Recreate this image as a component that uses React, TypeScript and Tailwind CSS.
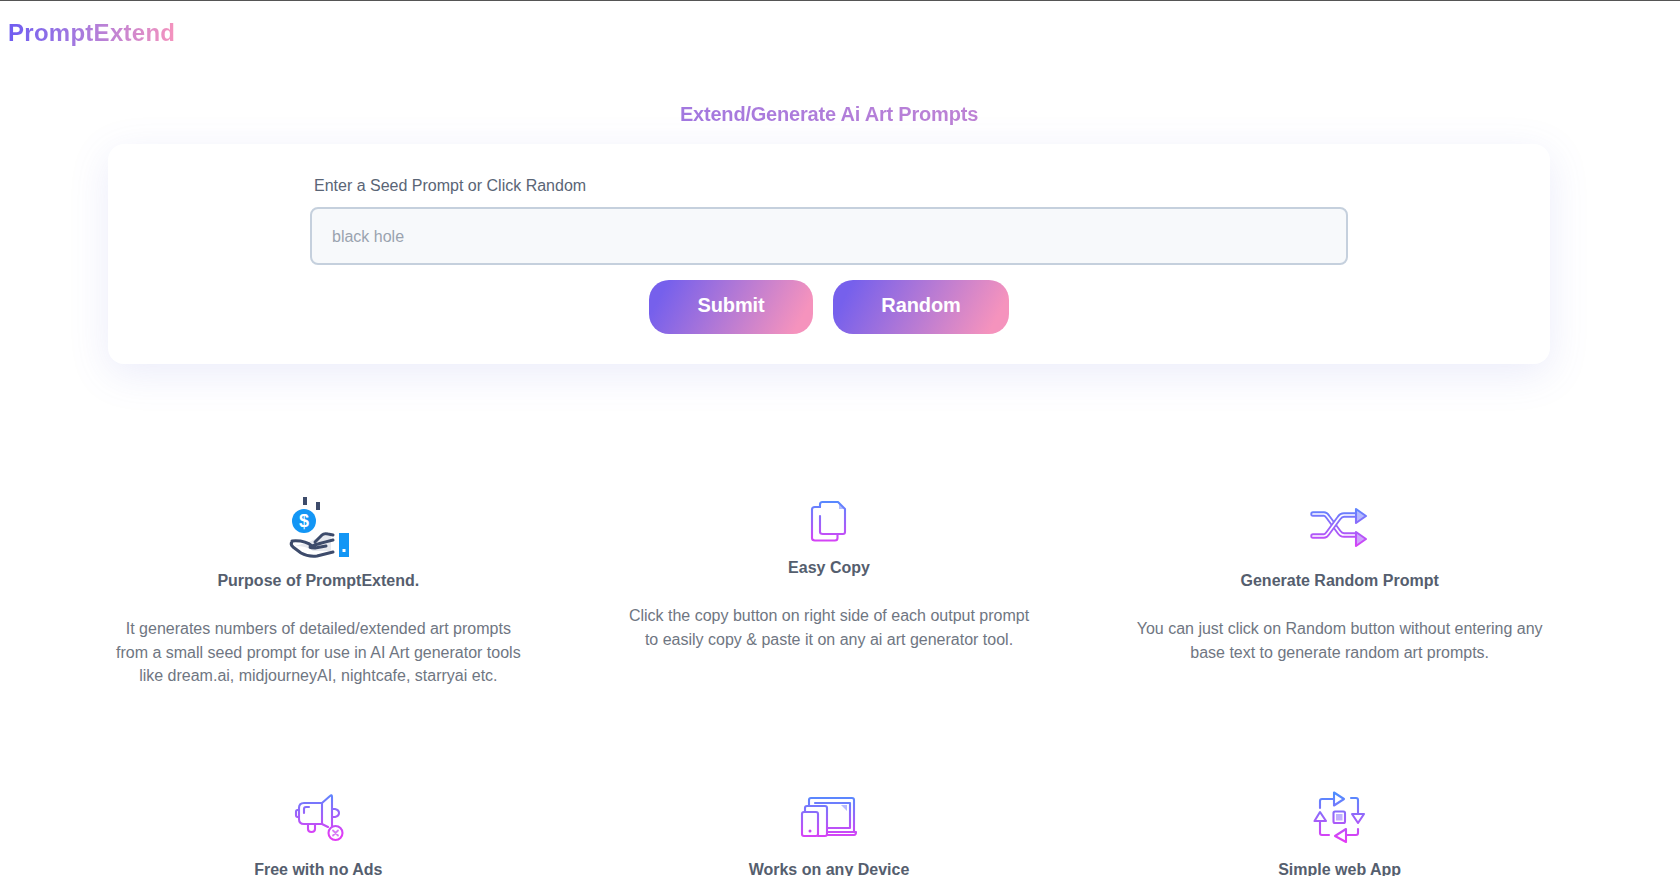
function Defs({ id }: { id: string }) {
  return (
    <defs>
      <linearGradient id={id} x1="0" y1="8" x2="0" y2="54" gradientUnits="userSpaceOnUse">
        <stop offset="0" stopColor="#4f8dff" />
        <stop offset="1" stopColor="#e23cf5" />
      </linearGradient>
      <linearGradient id={id + "f"} x1="0" y1="8" x2="0" y2="54" gradientUnits="userSpaceOnUse">
        <stop offset="0" stopColor="#a9c4ff" />
        <stop offset="1" stopColor="#d99bfb" />
      </linearGradient>
    </defs>
  );
}

const base = { fill: "none", strokeWidth: 2.1, strokeLinecap: "round" as const, strokeLinejoin: "round" as const };

function HandIcon() {
  return (
    <svg width="90" height="75" viewBox="2 -1 90 75" className="block mx-auto">
      <rect x="32" y="11" width="4" height="8" fill="#3d4b6b" />
      <rect x="45" y="16" width="4" height="8" fill="#3d4b6b" />
      <circle cx="33" cy="35" r="12" fill="#1396f5" />
      <text x="33" y="41" textAnchor="middle" fontSize="18" fontWeight="700" fill="#fff" fontFamily="Liberation Sans, sans-serif">$</text>
      <path d="M24 60 Q36 60 42 65 H60 V50 L50 50 L38 56 Z" fill="#e6e8ee" />
      <path d="M21 55 Q34 54 41 60 Q46 58 62 54 M41 60 Q36 62 44 62 L55 60 M21 56 Q19 58 22 61 L30 67 Q37 71 46 70 L62 66 M44 56 L51 49 Q53 47 57 48 L62 49" fill="none" stroke="#3d4b6b" strokeWidth="3" strokeLinecap="round" strokeLinejoin="round" />
      <rect x="68" y="47" width="10" height="24" fill="#1396f5" />
      <rect x="71.5" y="63" width="3" height="3" fill="#fff" />
    </svg>
  );
}

function CopyIcon() {
  return (
    <svg width="80" height="60" viewBox="-1 -4 80 60" className="block mx-auto">
      <Defs id="c" />
      <path d="M49 13 L54 18 H49 Z" fill="url(#cf)" />
      <g {...base} stroke="url(#c)">
        <path d="M30 16 V13.5 Q30 11 32.5 11 H48 L55 18 V41 Q55 43 53 43 H33 Q30 43 30 41 V25" />
        <path d="M30 16 H25 Q22 16 22 18.5 V47 Q22 49.5 25 49.5 H45 Q47.5 49.5 47.5 47 V43.5" />
      </g>
    </svg>
  );
}

function ShuffleIcon() {
  const a = "M13 18 H24 Q26 18 28 21 L39 36 Q41 39 44 39 H56";
  const b = "M13 40 H24 Q26 40 28 37 L39 22 Q41 19 44 19 H56";
  return (
    <svg width="80" height="60" viewBox="0 4 80 60" className="block mx-auto">
      <Defs id="s" />
      <g fill="none" strokeLinecap="round">
        <path d={a} stroke="url(#s)" strokeWidth="5.4" />
        <path d={a} stroke="#fff" strokeWidth="1.7" />
        <path d={b} stroke="url(#s)" strokeWidth="5.4" />
        <path d={b} stroke="#fff" strokeWidth="1.7" />
      </g>
      <path d="M56 13 L66 20 L56 27 Z" fill="url(#sf)" stroke="url(#s)" strokeWidth="2.1" strokeLinejoin="round" />
      <path d="M56 36 L66 43 L56 50 Z" fill="url(#sf)" stroke="url(#s)" strokeWidth="2.1" strokeLinejoin="round" />
    </svg>
  );
}

function MegaphoneIcon() {
  return (
    <svg width="80" height="60" viewBox="-1 7 80 60" className="block mx-auto">
      <Defs id="m" />
      <g {...base} stroke="url(#m)">
        <path d="M43 21 H25 Q20 21 20 26 V37 Q20 42 25 42 H43 Z" />
        <path d="M43 21 L51 14 Q53 12 53 15 V44" />
        <path d="M43 42 L49 45" />
        <path d="M25 31 V27 Q25 25 27 25 H30" />
        <path d="M20 28 H18.5 Q17 28 17 30 V33 Q17 35 18.5 35 H20" />
        <path d="M54 27 H56 Q60 28 60 31 Q60 34 56 35 H54" />
        <path d="M29 42 V47 Q29 50 32.5 50 Q36 50 36 47 V42" />
        <circle cx="56.5" cy="51" r="7" />
      </g>
      <path d="M54 48.5 L59 53.5 M59 48.5 L54 53.5" stroke="#d77cf5" strokeWidth="1.8" strokeLinecap="round" />
    </svg>
  );
}

function DevicesIcon() {
  return (
    <svg width="80" height="60" viewBox="-1 3 80 60" className="block mx-auto">
      <Defs id="d" />
      <path d="M51 19 H57 V25 Z" fill="url(#df)" />
      <g {...base} stroke="url(#d)">
        <path d="M19 19 V14 Q19 12 21 12 H62 Q64 12 64 14 V46" />
        <path d="M25 17 H60 V42 H37" />
        <path d="M37 46 H66 Q66 49 64 49 H37" />
        <path d="M15 26 V22 Q15 20 17 20 H35 Q37 20 37 22 V48 Q37 50 35 50 H28" />
        <rect x="12" y="26" width="16" height="24" rx="2" />
      </g>
      <circle cx="20" cy="45" r="1.5" fill="#c848f0" />
    </svg>
  );
}

function CycleIcon() {
  return (
    <svg width="80" height="60" viewBox="0 3 80 60" className="block mx-auto">
      <Defs id="y" />
      <rect x="36" y="28" width="6.5" height="6.5" fill="url(#yf)" />
      <g {...base} stroke="url(#y)">
        <path d="M20 22 V15 Q20 13 22 13 H34" />
        <path d="M34 6.5 L44 13 L34 19.5 Z" />
        <path d="M51 12 H56 Q58 12 58 14 V28" />
        <path d="M52 28 H64 L58 37 Z" />
        <path d="M58 43 V47 Q58 49 56 49 H46" />
        <path d="M46 43 L35 50 L46 56 Z" />
        <path d="M20 35 V47 Q20 49 22 49 H29" />
        <path d="M14.5 35 H26 L20 26 Z" />
        <rect x="33.5" y="25.5" width="11.5" height="11.5" rx="1.5" />
      </g>
    </svg>
  );
}

function Feature({ icon, title, lines, className }: { icon: React.ReactNode; title: string; lines?: string[]; className?: string }) {
  return (
    <div className="text-center">
      <div className={className}>{icon}</div>
      <h3 className="mt-[9px] text-[16px] leading-6 font-bold text-[#555e6e]">{title}</h3>
      {lines && (
        <p className="mt-6 text-[16px] leading-[23.7px] text-[#6f7682]">
          {lines.map((l) => (
            <span key={l} className="block">{l}</span>
          ))}
        </p>
      )}
    </div>
  );
}

export default function App() {
  return (
    <div className="h-[876px] overflow-hidden bg-white font-['Liberation_Sans',Arial,sans-serif]">
      <div className="border-t border-[#555]">
        <div className="h-[64px] pl-2 flex items-center">
          <span className="bg-linear-to-r from-[#6f5cf1] to-[#f593bd] bg-clip-text text-transparent text-[24px] leading-8 font-bold tracking-[0.27px]">PromptExtend</span>
        </div>
        <div className="w-[1658px]">
          <h2 className="mt-[35px] mx-[108px] text-center text-[20px] leading-7 font-bold tracking-[-0.2px] bg-linear-to-r from-[#6f5cf1] to-[#f593bd] bg-clip-text text-transparent">
            Extend/Generate Ai Art Prompts
          </h2>
          <div className="mt-[16px] mx-[108px] h-[220px] rounded-2xl bg-white shadow-[0_10px_40px_rgba(99,110,220,0.13)] pt-[30px]">
            <div className="mx-auto w-[1038px]">
              <label className="block pl-[4px] text-[16px] leading-6 text-[#5a6576]">Enter a Seed Prompt or Click Random</label>
              <input
                readOnly
                placeholder="black hole"
                className="mt-[9px] block w-full h-[58px] rounded-lg border-2 border-[#c5d0dd] bg-[#f7f9fb] px-5 pt-[2px] text-[16px] text-[#4a5568] placeholder:text-[#9aa3af] outline-none"
              />
              <div className="mt-[15px] flex justify-center gap-5">
                <button className="w-[164px] h-[54px] rounded-[20px] bg-linear-[118deg] from-[#7660ec] from-10% to-[#f593bd] to-90% pb-[5px] text-white text-[20px] font-bold tracking-[-0.1px]">Submit</button>
                <button className="w-[176px] h-[54px] rounded-[20px] bg-linear-[118deg] from-[#7660ec] from-10% to-[#f593bd] to-90% pb-[5px] text-white text-[20px] font-bold tracking-[-0.1px]">Random</button>
              </div>
            </div>
          </div>
          <div className="mt-[121px] px-[63px] grid grid-cols-3">
            <Feature
              icon={<HandIcon />}
              title="Purpose of PromptExtend."
              lines={["It generates numbers of detailed/extended art prompts", "from a small seed prompt for use in AI Art generator tools", "like dream.ai, midjourneyAI, nightcafe, starryai etc."]}
            />
            <Feature
              className="pt-[2px]"
              icon={<CopyIcon />}
              title="Easy Copy"
              lines={["Click the copy button on right side of each output prompt", "to easily copy & paste it on any ai art generator tool."]}
            />
            <Feature
              className="pt-[15px]"
              icon={<ShuffleIcon />}
              title="Generate Random Prompt"
              lines={["You can just click on Random button without entering any", "base text to generate random art prompts."]}
            />
          </div>
          <div className="mt-[101px] px-[63px] grid grid-cols-3">
            <Feature icon={<MegaphoneIcon />} title="Free with no Ads" />
            <Feature icon={<DevicesIcon />} title="Works on any Device" />
            <Feature icon={<CycleIcon />} title="Simple web App" />
          </div>
        </div>
      </div>
    </div>
  );
}
